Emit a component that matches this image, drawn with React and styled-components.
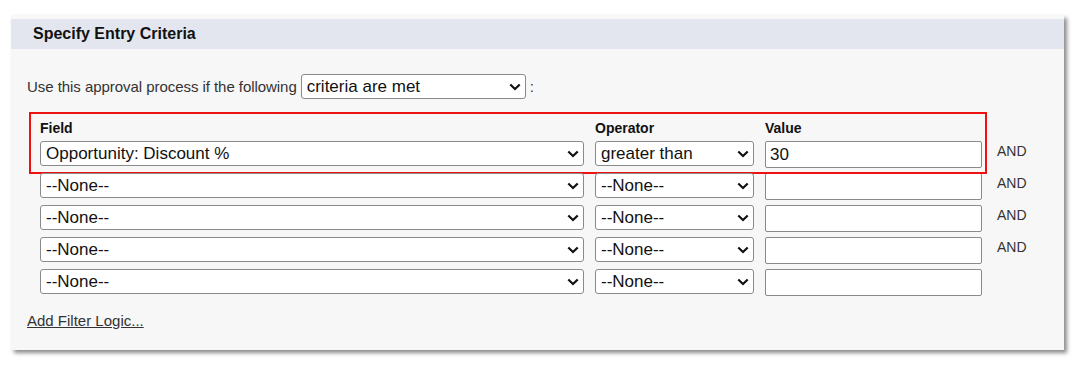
import React from 'react'
import styled, { createGlobalStyle } from 'styled-components'

const Global = createGlobalStyle`
  body {
    margin: 0;
    background: #ffffff;
    font-family: "Liberation Sans", Arial, sans-serif;
  }
`

const Page = styled.div`
  padding: 15px 0 0 11px;
  width: 1083px;
  height: 372px;
  box-sizing: border-box;
`

const Panel = styled.div`
  width: 1053px;
  height: 335px;
  background: #f7f7f7;
  border-top: 4px solid #f8f8f8;
  box-sizing: border-box;
  box-shadow: 3px 3px 4px rgba(0, 0, 0, 0.45);
  display: flex;
  flex-direction: column;
`

const Header = styled.div`
  height: 30px;
  background: #e3e6ef;
  display: flex;
  align-items: center;
  padding-left: 22px;
  font-size: 16px;
  font-weight: bold;
  color: #111;
`

const Body = styled.div`
  padding: 25px 0 0 16px;
  color: #333;
  font-size: 15px;
`

const Intro = styled.div`
  display: flex;
  align-items: center;
  gap: 4px;
  height: 25px;
  letter-spacing: -0.05px;
`

const SelectWrap = styled.div`
  position: relative;
  width: ${p => p.w}px;
  height: 25px;
  flex: none;
`

const Select = styled.select`
  appearance: none;
  -webkit-appearance: none;
  width: 100%;
  height: 100%;
  box-sizing: border-box;
  border: 1px solid #8a8a8a;
  border-radius: 3px;
  background: #fff;
  font-family: "Liberation Sans", Arial, sans-serif;
  font-size: 17px;
  color: #111;
  padding: 0 24px 0 5px;
  margin: 0;
  outline: none;
`

const Chevron = styled.svg`
  position: absolute;
  right: 5px;
  top: 9px;
  pointer-events: none;
`

const Criteria = styled.div`
  position: relative;
  margin: 21px 0 0 13px;
`

const Highlight = styled.div`
  position: absolute;
  left: -11px;
  top: -8px;
  width: 958px;
  height: 62px;
  border: 2px solid #ee1111;
  box-sizing: border-box;
  pointer-events: none;
`

const Grid = styled.div`
  display: grid;
  grid-template-columns: 544px 159px 217px auto;
  column-gap: 11px;
  row-gap: 5px;
  align-items: start;
`

const Label = styled.div`
  font-size: 14px;
  font-weight: bold;
  color: #111;
  line-height: 14px;
  margin-bottom: 1px;
  padding-top: 1px;
`

const Input = styled.input`
  width: 100%;
  height: 27px;
  box-sizing: border-box;
  border: 1px solid #8a8a8a;
  border-radius: 2px;
  background: #fff;
  font-family: "Liberation Sans", Arial, sans-serif;
  font-size: 17px;
  color: #111;
  padding: 0 4px;
  margin: 0;
  outline: none;
`

const Conj = styled.div`
  font-size: 14px;
  color: #333;
  padding: 2px 0 0 4px;
`

const Link = styled.a`
  display: inline-block;
  margin-top: 16px;
  font-size: 15px;
  color: #333;
  text-decoration: underline;
`

const Arrow = () => (
  <Chevron width="12" height="8" viewBox="0 0 12 8">
    <path d="M1.3 1.5 L6 6 L10.7 1.5" fill="none" stroke="#111" strokeWidth="2.2" />
  </Chevron>
)

const Dropdown = ({ w, value }) => (
  <SelectWrap w={w}>
    <Select defaultValue={value}>
      <option>{value}</option>
    </Select>
    <Arrow />
  </SelectWrap>
)

const rows = [
  { field: 'Opportunity: Discount %', op: 'greater than', value: '30', and: true },
  { field: '--None--', op: '--None--', value: '', and: true },
  { field: '--None--', op: '--None--', value: '', and: true },
  { field: '--None--', op: '--None--', value: '', and: true },
  { field: '--None--', op: '--None--', value: '', and: false },
]

export default function App() {
  return (
    <Page>
      <Global />
      <Panel>
        <Header>Specify Entry Criteria</Header>
        <Body>
          <Intro>
            <span>Use this approval process if the following</span>
            <Dropdown w={225} value="criteria are met" />
            <span>:</span>
          </Intro>
          <Criteria>
            <Highlight />
            <Grid>
              <Label>Field</Label>
              <Label>Operator</Label>
              <Label>Value</Label>
              <div />
              {rows.map((r, i) => (
                <React.Fragment key={i}>
                  <Dropdown w={544} value={r.field} />
                  <Dropdown w={159} value={r.op} />
                  <Input defaultValue={r.value} />
                  <Conj>{r.and ? 'AND' : ''}</Conj>
                </React.Fragment>
              ))}
            </Grid>
          </Criteria>
          <Link href="#">Add Filter Logic...</Link>
        </Body>
      </Panel>
    </Page>
  )
}
